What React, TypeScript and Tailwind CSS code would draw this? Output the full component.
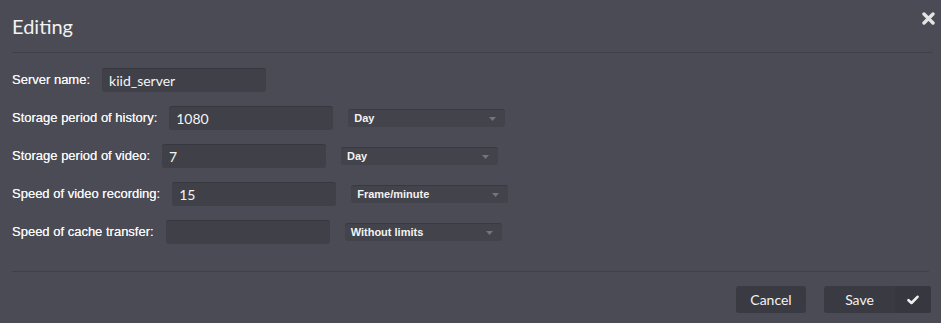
import React from "react";

const rows = [
  { label: "Server name:", value: "kiid_server", select: null as string | null },
  { label: "Storage period of history:", value: "1080", select: "Day" },
  { label: "Storage period of video:", value: "7", select: "Day" },
  { label: "Speed of video recording:", value: "15", select: "Frame/minute" },
  { label: "Speed of cache transfer:", value: "", select: "Without limits" },
];

export default function App() {
  return (
    <div className="w-[941px] h-[323px] bg-[#4a4b54] flex flex-col relative overflow-hidden">
      <div className="h-[53px] ml-[12px] mr-[8px] border-b border-[#3f4048] flex items-center">
        <span className="text-[20px] text-[#f2f2f2] font-['Lato',sans-serif] leading-none pb-[1px]">Editing</span>
      </div>
      <button className="absolute right-[6px] top-[11px] w-[14px] h-[14px] flex items-center justify-center">
        <svg width="13" height="13" viewBox="0 0 13 13">
          <path d="M2 2 L11 11 M11 2 L2 11" stroke="#e4e4e4" strokeWidth="3.4" strokeLinecap="round" />
        </svg>
      </button>
      <div className="flex flex-col gap-[14px] mt-[15px] pl-[12px]">
        {rows.map((r) => (
          <div key={r.label} className="flex items-center h-[24px]">
            <span className="text-[13px] text-[#f4f4f4] font-['Liberation_Sans',Arial,sans-serif] [text-shadow:0_0_0.3px_#f4f4f4]">{r.label}</span>
            <div className="ml-[12px] w-[164px] h-[24px] rounded-[3px] bg-[#3f4048] border-t border-[#37383f] flex items-center px-[7px] text-[14px] text-[#f4f4f4] font-['Lato',sans-serif]">
              {r.value}
            </div>
            {r.select && (
              <div className="ml-[15px] w-[157px] h-[18px] rounded-[3px] bg-[#42434b] border-t border-[#393a41] flex items-center justify-between pl-[6px] pr-[9px]">
                <span className="text-[11px] font-bold text-[#f2f2f2] font-['Liberation_Sans',Arial,sans-serif]">{r.select}</span>
                <svg width="7" height="4" viewBox="0 0 7 4">
                  <path d="M0 0 L7 0 L3.5 4 Z" fill="#74757c" />
                </svg>
              </div>
            )}
          </div>
        ))}
      </div>
      <div className="mt-[27px] ml-[12px] mr-[12px] border-t border-[#3f4048]" />
      <div className="flex justify-end mt-[14px] pr-[10px] gap-[18px]">
        <button className="w-[70px] h-[27px] rounded-[3px] bg-[#3a3b42] text-[14px] text-[#f2f2f2] font-['Lato',sans-serif] flex items-center justify-center">
          Cancel
        </button>
        <button className="w-[107px] h-[27px] rounded-[3px] bg-[#3a3b42] flex items-stretch overflow-hidden">
          <span className="flex-1 flex items-center justify-center text-[14px] text-[#f2f2f2] font-['Lato',sans-serif]">Save</span>
          <span className="w-[36px] bg-[#37383f] flex items-center justify-center">
            <svg width="12" height="10" viewBox="0 0 12 10">
              <path d="M1.5 5.2 L4.5 8 L10.5 1.8" stroke="#f0f0f0" strokeWidth="2.6" fill="none" strokeLinecap="round" strokeLinejoin="round" />
            </svg>
          </span>
        </button>
      </div>
    </div>
  );
}
